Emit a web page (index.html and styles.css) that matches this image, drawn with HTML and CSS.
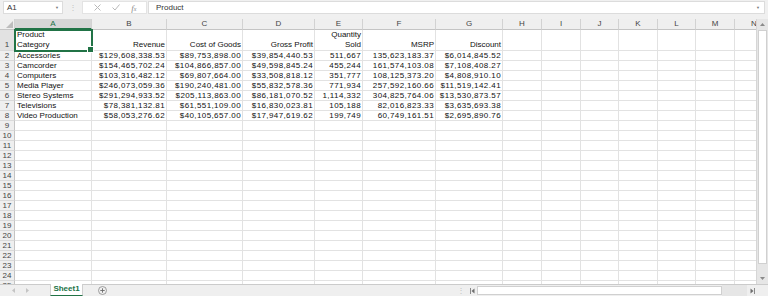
FILE: index.html
```html
<!DOCTYPE html>
<html>
<head>
<meta charset="utf-8">
<link rel="stylesheet" href="styles.css">
</head>
<body>
<div class="app">
  <div class="fbar">
    <div class="namebox"><span>A1</span><span class="caret">&#9660;</span></div>
    <div class="dots">&#8942;</div>
    <div class="fbtns">
      <svg width="7" height="7" viewBox="0 0 7 7"><path d="M0.5 0.5L6.5 6.5M6.5 0.5L0.5 6.5" stroke="#b9b9b9" stroke-width="1" fill="none"/></svg>
      <svg width="8" height="7" viewBox="0 0 8 7"><path d="M0.5 3.5L3 6L7.5 0.5" stroke="#b9b9b9" stroke-width="1" fill="none"/></svg>
      <span class="fx">f<small>x</small></span>
    </div>
    <div class="finput"><span>Product</span><span class="caret">&#9660;</span></div>
  </div>
  <div class="main">
    <div class="sheet">
      <span class="ch corner"><svg width="7" height="7" viewBox="0 0 7 7"><path d="M7 0L7 7L0 7Z" fill="#bdbdbd"/></svg></span><span class="ch selh">A</span><span class="ch">B</span><span class="ch">C</span><span class="ch">D</span><span class="ch">E</span><span class="ch">F</span><span class="ch">G</span><span class="ch">H</span><span class="ch">I</span><span class="ch">J</span><span class="ch">K</span><span class="ch">L</span><span class="ch">M</span><span class="ch">N</span>
      <span class="rh selr r1">1</span><span class="r1 sel">Product<br>Category</span><span class="r1 n">Revenue</span><span class="r1 n">Cost of Goods</span><span class="r1 n">Gross Profit</span><span class="r1 n">Quantity<br>Sold</span><span class="r1 n">MSRP</span><span class="r1 n">Discount</span><span></span><span></span><span></span><span></span><span></span><span></span><span></span>
      <span class="rh">2</span><span>Accessories</span><span class="n">$129,608,338.53</span><span class="n">$89,753,898.00</span><span class="n">$39,854,440.53</span><span class="n">511,667</span><span class="n">135,623,183.37</span><span class="n">$6,014,845.52</span><span></span><span></span><span></span><span></span><span></span><span></span><span></span>
      <span class="rh">3</span><span>Camcorder</span><span class="n">$154,465,702.24</span><span class="n">$104,866,857.00</span><span class="n">$49,598,845.24</span><span class="n">455,244</span><span class="n">161,574,103.08</span><span class="n">$7,108,408.27</span><span></span><span></span><span></span><span></span><span></span><span></span><span></span>
      <span class="rh">4</span><span>Computers</span><span class="n">$103,316,482.12</span><span class="n">$69,807,664.00</span><span class="n">$33,508,818.12</span><span class="n">351,777</span><span class="n">108,125,373.20</span><span class="n">$4,808,910.10</span><span></span><span></span><span></span><span></span><span></span><span></span><span></span>
      <span class="rh">5</span><span>Media Player</span><span class="n">$246,073,059.36</span><span class="n">$190,240,481.00</span><span class="n">$55,832,578.36</span><span class="n">771,934</span><span class="n">257,592,160.66</span><span class="n">$11,519,142.41</span><span></span><span></span><span></span><span></span><span></span><span></span><span></span>
      <span class="rh">6</span><span>Stereo Systems</span><span class="n">$291,294,933.52</span><span class="n">$205,113,863.00</span><span class="n">$86,181,070.52</span><span class="n">1,114,332</span><span class="n">304,825,764.06</span><span class="n">$13,530,873.57</span><span></span><span></span><span></span><span></span><span></span><span></span><span></span>
      <span class="rh">7</span><span>Televisions</span><span class="n">$78,381,132.81</span><span class="n">$61,551,109.00</span><span class="n">$16,830,023.81</span><span class="n">105,188</span><span class="n">82,016,823.33</span><span class="n">$3,635,693.38</span><span></span><span></span><span></span><span></span><span></span><span></span><span></span>
      <span class="rh">8</span><span>Video Production</span><span class="n">$58,053,276.62</span><span class="n">$40,105,657.00</span><span class="n">$17,947,619.62</span><span class="n">199,749</span><span class="n">60,749,161.51</span><span class="n">$2,695,890.76</span><span></span><span></span><span></span><span></span><span></span><span></span><span></span>
      <span class="rh">9</span><span></span><span></span><span></span><span></span><span></span><span></span><span></span><span></span><span></span><span></span><span></span><span></span><span></span><span></span>
      <span class="rh">10</span><span></span><span></span><span></span><span></span><span></span><span></span><span></span><span></span><span></span><span></span><span></span><span></span><span></span><span></span>
      <span class="rh">11</span><span></span><span></span><span></span><span></span><span></span><span></span><span></span><span></span><span></span><span></span><span></span><span></span><span></span><span></span>
      <span class="rh">12</span><span></span><span></span><span></span><span></span><span></span><span></span><span></span><span></span><span></span><span></span><span></span><span></span><span></span><span></span>
      <span class="rh">13</span><span></span><span></span><span></span><span></span><span></span><span></span><span></span><span></span><span></span><span></span><span></span><span></span><span></span><span></span>
      <span class="rh">14</span><span></span><span></span><span></span><span></span><span></span><span></span><span></span><span></span><span></span><span></span><span></span><span></span><span></span><span></span>
      <span class="rh">15</span><span></span><span></span><span></span><span></span><span></span><span></span><span></span><span></span><span></span><span></span><span></span><span></span><span></span><span></span>
      <span class="rh">16</span><span></span><span></span><span></span><span></span><span></span><span></span><span></span><span></span><span></span><span></span><span></span><span></span><span></span><span></span>
      <span class="rh">17</span><span></span><span></span><span></span><span></span><span></span><span></span><span></span><span></span><span></span><span></span><span></span><span></span><span></span><span></span>
      <span class="rh">18</span><span></span><span></span><span></span><span></span><span></span><span></span><span></span><span></span><span></span><span></span><span></span><span></span><span></span><span></span>
      <span class="rh">19</span><span></span><span></span><span></span><span></span><span></span><span></span><span></span><span></span><span></span><span></span><span></span><span></span><span></span><span></span>
      <span class="rh">20</span><span></span><span></span><span></span><span></span><span></span><span></span><span></span><span></span><span></span><span></span><span></span><span></span><span></span><span></span>
      <span class="rh">21</span><span></span><span></span><span></span><span></span><span></span><span></span><span></span><span></span><span></span><span></span><span></span><span></span><span></span><span></span>
      <span class="rh">22</span><span></span><span></span><span></span><span></span><span></span><span></span><span></span><span></span><span></span><span></span><span></span><span></span><span></span><span></span>
      <span class="rh">23</span><span></span><span></span><span></span><span></span><span></span><span></span><span></span><span></span><span></span><span></span><span></span><span></span><span></span><span></span>
      <span class="rh">24</span><span></span><span></span><span></span><span></span><span></span><span></span><span></span><span></span><span></span><span></span><span></span><span></span><span></span><span></span>
      <span class="rh">25</span><span></span><span></span><span></span><span></span><span></span><span></span><span></span><span></span><span></span><span></span><span></span><span></span><span></span><span></span>
    </div>
    <div class="vscroll">
      <div class="varrow"><svg width="5" height="3" viewBox="0 0 5 3"><path d="M0 3L2.5 0L5 3Z" fill="#8a8a8a"/></svg></div>
      <div class="vthumb"></div>
      <div class="vtrack"></div>
      <div class="varrow"><svg width="5" height="3" viewBox="0 0 5 3"><path d="M0 0L5 0L2.5 3Z" fill="#8a8a8a"/></svg></div>
    </div>
  </div>
  <div class="tabs">
    <div class="nav">
      <svg width="3" height="5" viewBox="0 0 3 5"><path d="M3 0L0 2.5L3 5Z" fill="#c4c4c4"/></svg>
      <svg width="3" height="5" viewBox="0 0 3 5"><path d="M0 0L3 2.5L0 5Z" fill="#c4c4c4"/></svg>
    </div>
    <div class="tab">Sheet1</div>
    <div class="add"><svg width="9" height="9" viewBox="0 0 9 9"><circle cx="4.5" cy="4.5" r="4" fill="none" stroke="#8a8a8a" stroke-width="0.8"/><path d="M4.5 2.3V6.7M2.3 4.5H6.7" stroke="#6a6a6a" stroke-width="0.9"/></svg></div>
    <div class="spacer"></div>
    <div class="hs">
      <div class="grip">&#8942;</div>
      <div class="harrow"><svg width="5" height="6" viewBox="0 0 5 6"><path d="M0.5 0V6" stroke="#8a8a8a" stroke-width="1"/><path d="M4.5 0.5L1.5 3L4.5 5.5Z" fill="#6f6f6f"/></svg></div>
      <div class="hthumb"></div>
      <div class="htrack"></div>
      <div class="harrow"><svg width="5" height="6" viewBox="0 0 5 6"><path d="M0.5 0.5L3.5 3L0.5 5.5Z" fill="#6f6f6f"/><path d="M4.5 0V6" stroke="#8a8a8a" stroke-width="1"/></svg></div>
      <div class="hcorner"></div>
    </div>
  </div>
</div>
</body>
</html>
```
FILE: styles.css
```css
* { box-sizing: border-box; }
html, body { margin: 0; padding: 0; }
body {
  width: 768px;
  height: 296px;
  overflow: hidden;
  background: #fff;
  color: #111;
  font-family: "Liberation Sans", Arial, sans-serif;
  font-size: 8px;
}
.app { display: flex; flex-direction: column; height: 296px; }

/* formula bar */
.fbar {
  height: 19px;
  flex: none;
  background: #f0f0f0;
  display: flex;
  align-items: flex-start;
  padding: 1px 3px 0 3px;
}
.namebox {
  width: 60px;
  height: 13px;
  background: #fff;
  border: 1px solid #dcdcdc;
  display: flex;
  align-items: center;
  justify-content: space-between;
  padding: 0 3px;
  color: #333;
}
.caret { font-size: 4px; color: #777; }
.dots { width: 19px; height: 13px; line-height: 13px; text-align: center; color: #c2c2c2; font-size: 8px; }
.fbtns {
  width: 65px;
  height: 13px;
  background: #fff;
  border: 1px solid #e3e3e3;
  display: flex;
  align-items: center;
  justify-content: space-around;
  padding: 0 4px 0 6px;
}
.fx { font-family: "Liberation Serif", serif; font-style: italic; color: #8a8a8a; font-size: 9px; }
.fx small { font-size: 6px; }
.finput {
  flex: 1;
  height: 13px;
  margin-left: 1px;
  background: #fff;
  border: 1px solid #dcdcdc;
  display: flex;
  align-items: center;
  justify-content: space-between;
  padding: 0 4px 0 7px;
  color: #333;
}

/* sheet */
.main { display: flex; height: 265px; flex: none; }
.sheet {
  width: 756px;
  height: 265px;
  overflow: hidden;
  display: grid;
  grid-template-columns: 15px 77px 75px 76px 72px 48px 73px 67px 39px 39px 38px 39px 38px 39px 39px;
  grid-template-rows: 11px 21px repeat(24, 10px);
  align-content: start;
}
.sheet > span {
  border-right: 1px solid #e2e2e2;
  border-bottom: 1px solid #e2e2e2;
  padding: 0 2px;
  line-height: 9px;
  white-space: nowrap;
  overflow: hidden;
  color: #111;
}
.sheet > .n { text-align: right; letter-spacing: 0.4px; padding-right: 1px; }
.sheet > .r1 {
  display: flex;
  flex-direction: column;
  justify-content: flex-end;
  line-height: 10px;
  letter-spacing: 0;
}
.sheet > .ch {
  background: #efefef;
  border-right-color: #d2d2d2;
  border-bottom-color: #c4c4c4;
  text-align: center;
  color: #444;
  line-height: 10px;
  padding: 0;
}
.sheet > .corner { display: flex; align-items: flex-end; justify-content: flex-end; padding: 0 1px 1px 0; }
.sheet > .selh { background: #d6d6d6; color: #217346; border-bottom: 2px solid #217346; }
.sheet > .rh {
  background: #efefef;
  border-right-color: #c4c4c4;
  border-bottom-color: #dadada;
  text-align: center;
  color: #444;
  padding: 0;
}
.sheet > .selr { background: #e2e2e2; color: #444; align-items: center; }
.sheet > .sel {
  position: relative;
  overflow: visible;
  outline: 2px solid #217346;
  outline-offset: -1px;
}
.sheet > .sel::after {
  content: "";
  position: absolute;
  right: -3px;
  bottom: -3px;
  width: 5px;
  height: 5px;
  background: #217346;
  border: 1px solid #fff;
}

/* vertical scrollbar */
.vscroll {
  width: 12px;
  background: #e6e6e6;
  display: flex;
  flex-direction: column;
  border-left: 1px solid #d6d6d6;
}
.varrow { height: 11px; display: flex; align-items: center; justify-content: center; }
.vthumb { height: 234px; background: #fff; border: 1px solid #d0d0d0; margin: 0 1px; }
.vtrack { flex: 1; }

/* tab bar */
.tabs {
  height: 12px;
  flex: none;
  background: #efefef;
  border-top: 1px solid #cbcbcb;
  display: flex;
  align-items: stretch;
}
.nav { width: 50px; display: flex; align-items: center; gap: 11px; padding-left: 12px; }
.tab {
  width: 33px;
  background: #fff;
  color: #217346;
  font-weight: bold;
  text-align: center;
  line-height: 10px;
  border-left: 1px solid #cfcfcf;
  border-right: 1px solid #cfcfcf;
  border-bottom: 1px solid #217346;
  margin-top: -1px;
}
.add { width: 38px; display: flex; align-items: center; justify-content: center; }
.spacer { flex: 1; }
.hs { width: 313px; display: flex; align-items: stretch; }
.grip { width: 12px; text-align: center; color: #c2c2c2; line-height: 11px; }
.harrow { width: 10px; display: flex; align-items: center; justify-content: center; }
.hthumb { width: 245px; background: #fff; border: 1px solid #d0d0d0; margin: 1px 0; }
.htrack { width: 25px; background: #e6e6e6; }
.hcorner { width: 11px; background: #efefef; }
```
